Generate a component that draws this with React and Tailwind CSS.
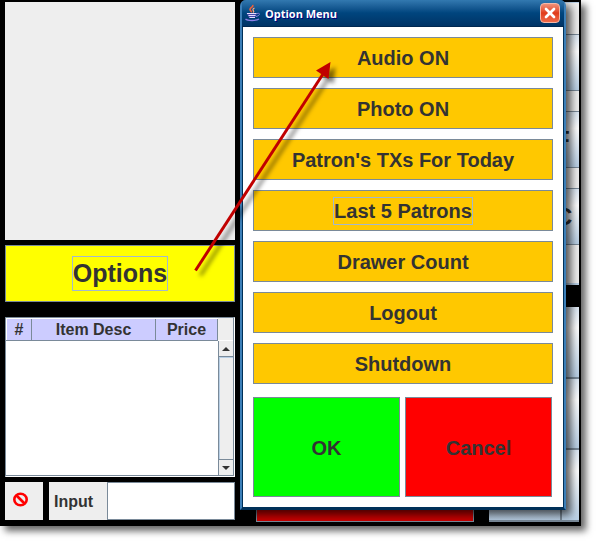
import { X } from 'lucide-react';

const MENU_ITEMS = [
  { label: 'Audio ON' },
  { label: 'Photo ON' },
  { label: "Patron's TXs For Today" },
  { label: 'Last 5 Patrons', focused: true },
  { label: 'Drawer Count' },
  { label: 'Logout' },
  { label: 'Shutdown' },
];

const KEY_FACE = 'bg-linear-to-b from-[#dce8f4] via-[#ffffff] via-30% to-[#b8cfe5]';

function JavaIcon() {
  return (
    <svg className="h-[18px] w-4 shrink-0" viewBox="0 0 16 18" fill="none" aria-hidden="true">
      <path d="M7.500 1c1.500 2-2.500 2.500-2.500 4.500 0 1.300 2 1.500 1.500 3" stroke="#f06038" strokeWidth="1.600" />
      <path d="M9.500 4c-1.800 1-2 1.800-1 2.800.6.600.2 1.200-.3 1.700" stroke="#ffa880" strokeWidth="1.200" />
      <path d="M1.500 9h10.500l-1 3-1.500 2h-5l-1.500-2z" fill="#4848a8" />
      <path d="M2 9.500h9.500M3.500 11.500h7M4.500 13.500h5.500" stroke="#e4dcff" strokeWidth="1" />
      <path d="M12 9.500c3.500-1 3.500 2-1 3" stroke="#8c78dc" strokeWidth="1" />
      <path d="M.5 15c2 2 11 2 13.500 0" stroke="#8c80e8" strokeWidth="1.300" />
    </svg>
  );
}

function StopIcon() {
  return (
    <svg className="size-[15px]" viewBox="0 0 15 15" fill="none" stroke="currentColor" strokeWidth="2.600" aria-hidden="true">
      <ellipse cx="7.500" cy="7.500" rx="6.200" ry="5.800" />
      <path d="M3.500 3.500l8 8" />
    </svg>
  );
}

function MenuButton({ label, focused }) {
  return (
    <button
      type="button"
      className="flex h-[41px] items-center justify-center border border-[#7a8a99] bg-[#ffc800] text-xl font-bold"
    >
      <span className={focused ? 'border border-[#a3b8cc] leading-[26px]' : ''}>{label}</span>
    </button>
  );
}

function OptionDialog() {
  return (
    <section
      role="dialog"
      aria-label="Option Menu"
      className="absolute top-0 right-[15px] left-60 rounded-t-md border-x-2 border-b-2 border-[#3c7fb8] border-b-[#003058] bg-[#003058] shadow-[5px_5px_8px_rgba(0,0,0,0.65)]"
    >
      <header className="flex h-[27px] items-center gap-1 rounded-t-sm border-b border-[#002850] bg-linear-to-b from-[#3279b0] via-[#00457e] via-50% to-[#003466] pr-1 pl-[3px]">
        <JavaIcon />
        <h1 className="flex-1 pt-0.5 font-['Open_Sans','Noto_Sans',sans-serif] text-[11px] font-bold text-white [text-shadow:1px_1px_0_#000080]">
          Option Menu
        </h1>
        <button
          type="button"
          aria-label="Close"
          className="flex size-5 items-center justify-center rounded-sm border border-[#f4b8a8] bg-linear-to-b from-[#f09078] via-[#e03a18] via-50% to-[#f06a48] text-white"
        >
          <X size={16} strokeWidth={4} className="shrink-0" />
        </button>
      </header>
      <div className="mx-px mb-px bg-white p-2.5">
        <div className="flex flex-col gap-2.5">
          {MENU_ITEMS.map((item) => (
            <MenuButton key={item.label} label={item.label} focused={item.focused} />
          ))}
        </div>
        <div className="mt-[13px] grid grid-cols-2 gap-[5px] pr-px">
          <button type="button" className="h-[100px] border border-[#7a8a99] bg-[#00ff00] pt-0.5 text-xl font-bold">
            OK
          </button>
          <button type="button" className="h-[100px] border border-[#7a8a99] bg-[#ff0000] pt-0.5 text-xl font-bold">
            Cancel
          </button>
        </div>
      </div>
    </section>
  );
}

function ItemTable() {
  return (
    <div className="flex min-h-40 flex-1 border border-[#7a8a99] border-r-white border-b-white bg-white">
      <div className="flex-1 border-b border-[#7a8a99] pt-px">
        <table className="w-full table-fixed border-collapse text-base leading-[20px]">
          <thead>
            <tr className="bg-[#ccccff]">
              <th className="w-[25px] border-r border-b border-l border-[#7a8a99] border-l-white p-0 pt-px">#</th>
              <th className="border-r border-b border-[#7a8a99] p-0 pt-px">Item Desc</th>
              <th className="w-[62px] border-r border-b border-[#7a8a99] p-0 pt-px">Price</th>
            </tr>
          </thead>
          <tbody />
        </table>
      </div>
      <div className="flex w-4 flex-col border-r border-b border-[#7a8a99] bg-[#eeeeee]">
        <div className="h-[23px] border-b border-white" />
        <div className="flex flex-1 flex-col border-l border-[#7a8a99]">
          <button type="button" aria-label="Scroll up" className="flex h-4 items-center justify-center border-b border-[#7a8a99]">
            <svg className="h-1 w-2" viewBox="0 0 8 4" fill="#333333"><path d="M0 4 4 0l4 4z" /></svg>
          </button>
          <div className="flex-1 border-t border-l border-[#b8cfe5]" />
          <button type="button" aria-label="Scroll down" className="flex h-4 items-center justify-center border-t border-[#7a8a99]">
            <svg className="h-1 w-2" viewBox="0 0 8 4" fill="#333333"><path d="M0 0h8L4 4z" /></svg>
          </button>
        </div>
      </div>
    </div>
  );
}

function Register() {
  return (
    <div className="flex w-[230px] shrink-0 flex-col pb-0.5">
      <div className="h-[238px] bg-[#eeeeee]" />
      <button
        type="button"
        className="mt-[5px] flex h-[57px] items-center justify-center border border-[#7a8a99] bg-[#ffff00] text-[25px] font-bold"
      >
        <span className="border border-[#a3b8cc] leading-[33px]">Options</span>
      </button>
      <div className="mt-[15px] flex flex-1 flex-col">
        <ItemTable />
      </div>
      <div className="mt-[5px] flex h-[38px] gap-1.5">
        <button type="button" aria-label="Clear" className="w-[38px] bg-[#eeeeee] pb-1 pl-2 text-[#ff0000]">
          <StopIcon />
        </button>
        <div className="flex flex-1 items-center bg-[#eeeeee]">
          <label htmlFor="entry" className="w-[58px] pt-0.5 pl-[5px] text-base font-bold">Input</label>
          <input
            id="entry"
            type="text"
            className="h-full w-0 flex-1 border border-[#7a8a99] bg-white px-1 outline-none"
          />
        </div>
      </div>
    </div>
  );
}

function Key({ children }) {
  return (
    <button type="button" className={`h-[57px] border-y border-[#7a8a99] pl-[66px] text-left text-2xl font-bold ${KEY_FACE}`}>
      {children}
    </button>
  );
}

function Keypad() {
  return (
    <div className="flex w-[90px] shrink-0 flex-col">
      <div className="flex flex-col gap-5 border-t border-b-2 border-[#b8cfe5] bg-[#eeeeee] pt-[31px] pb-[38px]">
        <Key />
        <Key>F</Key>
        <Key>C</Key>
      </div>
      <div className="mt-[22px] flex flex-1 flex-col">
        {[1, 2, 3].map((row) => (
          <div key={row} className="flex flex-1">
            <button type="button" aria-label={`Left key ${row}`} className={`w-[73px] border-r-2 border-b-2 border-[#7a8a99] ${KEY_FACE}`} />
            <button type="button" aria-label={`Right key ${row}`} className={`flex-1 border-b-2 border-[#7a8a99] ${KEY_FACE}`} />
          </div>
        ))}
      </div>
    </div>
  );
}

function Arrow() {
  return (
    <svg
      className="pointer-events-none absolute top-[50px] left-[185px] h-[240px] w-[160px] drop-shadow-[5px_5px_2px_rgba(0,0,0,0.5)]"
      viewBox="185 50 160 240"
      aria-hidden="true"
    >
      <path d="M195.500 270.500 323 74" stroke="#c00000" strokeWidth="3" />
      <path d="M330.500 62 328.500 79 316 70.500z" fill="#c00000" />
    </svg>
  );
}

export default function App() {
  return (
    <div className="flex min-h-screen bg-white pr-[15px] pb-[15px] font-['Liberation_Sans',Arial,sans-serif] text-[#333333]">
      <main className="relative flex flex-1 bg-black pt-0.5 pr-0.5 pb-1 pl-[5px] shadow-[5px_5px_7px_rgba(0,0,0,0.6)]">
        <Register />
        <div className="flex flex-1 items-end pr-[15px] pl-[21px]">
          <button type="button" aria-label="Void" className="h-20 w-full border border-[#7a8a99] bg-[#cc0000]" />
        </div>
        <Keypad />
        <OptionDialog />
        <Arrow />
      </main>
    </div>
  );
}
